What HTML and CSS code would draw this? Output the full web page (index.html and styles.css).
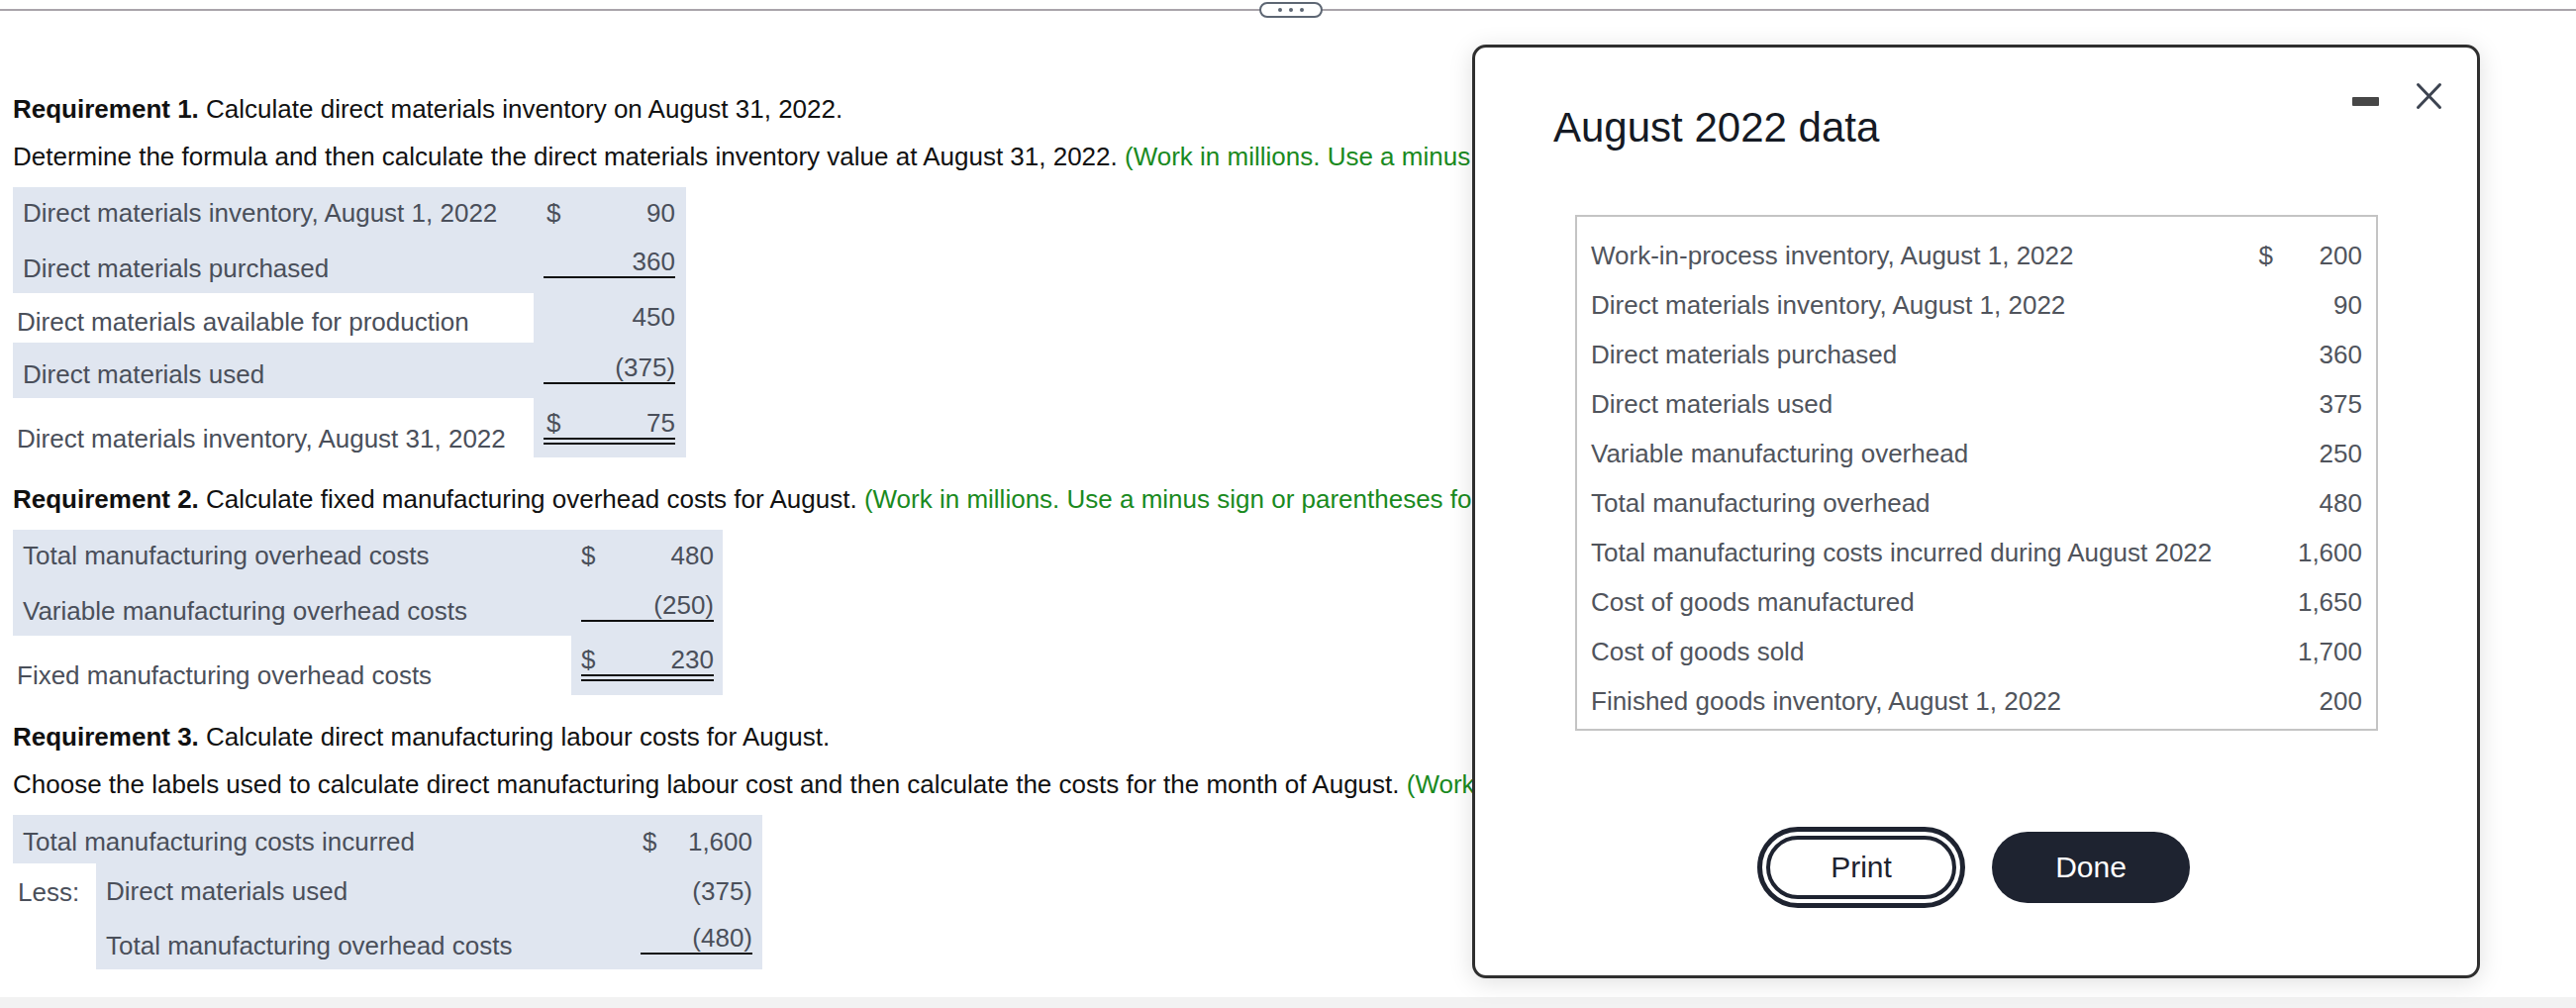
FILE: index.html
```html
<!DOCTYPE html>
<html lang="en">
<head>
<meta charset="utf-8">
<title>August 2022 data</title>
<link rel="stylesheet" href="styles.css">
</head>
<body>
<div class="topbar"><div class="grip"><span></span><span></span><span></span></div></div>
<main class="content">
  <p class="line req first"><b>Requirement 1.</b> Calculate direct materials inventory on August 31, 2022.</p>
  <p class="line instr">Determine the formula and then calculate the direct materials inventory value at August 31, 2022. <span class="hint">(Work in millions. Use a minus sign or parentheses for a number to be subtracted.)</span></p>
  <div class="sheet t1">
    <div class="row shade h53">
      <div class="lab pt11">Direct materials inventory, August 1, 2022</div>
      <div class="val pt11"><div class="amt"><span>$</span><span>90</span></div></div>
    </div>
    <div class="row shade h54">
      <div class="lab pt14">Direct materials purchased</div>
      <div class="val pt7"><div class="amt single"><span></span><span>360</span></div></div>
    </div>
    <div class="row h50">
      <div class="lab plain pt14">Direct materials available for production</div>
      <div class="val shade pt9"><div class="amt"><span></span><span>450</span></div></div>
    </div>
    <div class="row shade h56">
      <div class="lab pt17">Direct materials used</div>
      <div class="val pt10"><div class="amt single"><span></span><span>(375)</span></div></div>
    </div>
    <div class="row h60">
      <div class="lab plain pt26">Direct materials inventory, August 31, 2022</div>
      <div class="val shade pt10"><div class="amt double"><span>$</span><span>75</span></div></div>
    </div>
  </div>

  <p class="line req"><b>Requirement 2.</b> Calculate fixed manufacturing overhead costs for August. <span class="hint">(Work in millions. Use a minus sign or parentheses for a number to be subtracted.)</span></p>
  <div class="sheet t2">
    <div class="row shade h54">
      <div class="lab pt11">Total manufacturing overhead costs</div>
      <div class="val pt11"><div class="amt"><span>$</span><span>480</span></div></div>
    </div>
    <div class="row shade h53">
      <div class="lab pt13">Variable manufacturing overhead costs</div>
      <div class="val pt7"><div class="amt single"><span></span><span>(250)</span></div></div>
    </div>
    <div class="row h60">
      <div class="lab plain pt25">Fixed manufacturing overhead costs</div>
      <div class="val shade pt9"><div class="amt double"><span>$</span><span>230</span></div></div>
    </div>
  </div>

  <p class="line req"><b>Requirement 3.</b> Calculate direct manufacturing labour costs for August.</p>
  <p class="line instr">Choose the labels used to calculate direct manufacturing labour cost and then calculate the costs for the month of August. <span class="hint">(Work in millions. Use a minus sign or parentheses for a number to be subtracted.)</span></p>
  <div class="sheet t3">
    <div class="row shade h49">
      <div class="lab wide pt12">Total manufacturing costs incurred</div>
      <div class="val pt12"><div class="amt"><span>$</span><span>1,600</span></div></div>
    </div>
    <div class="split">
      <div class="less pt14">Less:</div>
      <div class="subblock shade">
        <div class="row h54">
          <div class="lab pt13">Direct materials used</div>
          <div class="val pt13"><div class="amt"><span></span><span>(375)</span></div></div>
        </div>
        <div class="row h53">
          <div class="lab pt14">Total manufacturing overhead costs</div>
          <div class="val pt6"><div class="amt single"><span></span><span>(480)</span></div></div>
        </div>
      </div>
    </div>
  </div>
</main>
<div class="band"></div>

<section class="modal">
  <header class="mhead">
    <h2 class="mtitle">August 2022 data</h2>
    <div class="mctrl">
      <span class="minbtn"></span>
      <svg class="xbtn" viewBox="0 0 27 28" aria-hidden="true"><path d="M2.5 2.5 L24.5 25.5 M24.5 2.5 L2.5 25.5" fill="none" stroke="#3d4451" stroke-width="3" stroke-linecap="round"/></svg>
    </div>
  </header>
  <div class="databox">
    <div class="drow"><span>Work-in-process inventory, August 1, 2022</span><span class="dc">$</span><span class="dv">200</span></div>
    <div class="drow"><span>Direct materials inventory, August 1, 2022</span><span class="dc"></span><span class="dv">90</span></div>
    <div class="drow"><span>Direct materials purchased</span><span class="dc"></span><span class="dv">360</span></div>
    <div class="drow"><span>Direct materials used</span><span class="dc"></span><span class="dv">375</span></div>
    <div class="drow"><span>Variable manufacturing overhead</span><span class="dc"></span><span class="dv">250</span></div>
    <div class="drow"><span>Total manufacturing overhead</span><span class="dc"></span><span class="dv">480</span></div>
    <div class="drow"><span>Total manufacturing costs incurred during August 2022</span><span class="dc"></span><span class="dv">1,600</span></div>
    <div class="drow"><span>Cost of goods manufactured</span><span class="dc"></span><span class="dv">1,650</span></div>
    <div class="drow"><span>Cost of goods sold</span><span class="dc"></span><span class="dv">1,700</span></div>
    <div class="drow"><span>Finished goods inventory, August 1, 2022</span><span class="dc"></span><span class="dv">200</span></div>
  </div>
  <div class="mbtns">
    <button class="btn print" type="button">Print</button>
    <button class="btn done" type="button">Done</button>
  </div>
</section>
</body>
</html>
```

FILE: styles.css
```css
* { box-sizing: border-box; }
html, body { margin: 0; padding: 0; }
body {
  width: 2602px;
  height: 1018px;
  overflow: hidden;
  position: relative;
  background: #fff;
  font-family: "Liberation Sans", Arial, sans-serif;
  font-size: 26px;
  color: #111;
}

/* top resize bar */
.topbar {
  height: 20px;
  display: flex;
  justify-content: center;
  align-items: center;
  background: linear-gradient(#a9a4aa, #a9a4aa) center / 100% 2px no-repeat;
}
.grip {
  width: 64px;
  height: 16px;
  margin-left: 6px;
  border: 2px solid #5d6673;
  border-radius: 9px;
  background: #fff;
  display: flex;
  justify-content: center;
  align-items: center;
  gap: 7px;
}
.grip span {
  width: 4px;
  height: 4px;
  border-radius: 50%;
  background: #5d6673;
}

/* main question content (clipped by the floating window edge) */
.content {
  width: 1487px;
  overflow: hidden;
  padding: 72px 0 0 13px;
}
.line {
  margin: 0;
  line-height: 36px;
  white-space: nowrap;
}
.req { margin-top: 24px; }
.req.first { margin-top: 0; }
.instr { margin-top: 12px; }
.hint { color: #1a8a1e; }

.sheet {
  margin-top: 13px;
  color: #4a4f5a;
}
.shade { background: #e0e6f0; }
.row { display: flex; }
.lab {
  padding-left: 10px;
  line-height: 30px;
  white-space: nowrap;
}
.lab.plain { padding-left: 4px; background: #fff; }
.val { line-height: 30px; }
.amt {
  display: flex;
  justify-content: space-between;
  line-height: 30px;
}
.amt.single { border-bottom: 2px solid #111; }
.amt.double { border-bottom: 7px double #111; }

.h49 { height: 49px; }
.h50 { height: 50px; }
.h53 { height: 53px; }
.h54 { height: 54px; }
.h56 { height: 56px; }
.h60 { height: 60px; }
.pt6 { padding-top: 6px; }
.pt7 { padding-top: 7px; }
.pt9 { padding-top: 9px; }
.pt10 { padding-top: 10px; }
.pt11 { padding-top: 11px; }
.pt12 { padding-top: 12px; }
.pt13 { padding-top: 13px; }
.pt14 { padding-top: 14px; }
.pt17 { padding-top: 17px; }
.pt25 { padding-top: 25px; }
.pt26 { padding-top: 26px; }

.t1 { width: 680px; }
.t1 .lab { width: 526px; }
.t1 .val { width: 154px; padding-left: 10px; padding-right: 11px; }
.t1 .amt { padding-left: 3px; }

.t2 { width: 717px; }
.t2 .lab { width: 564px; }
.t2 .val { width: 153px; padding-left: 10px; padding-right: 9px; }

.t3 { width: 757px; }
.t3 .lab { width: 540px; }
.t3 .lab.wide { width: 624px; }
.t3 .val { width: 133px; padding-left: 10px; padding-right: 10px; }
.t3 .amt { padding-left: 2px; }
.split { display: flex; }
.less {
  width: 84px;
  padding-left: 5px;
  line-height: 30px;
}
.subblock { width: 673px; }

.band {
  margin-top: 28px;
  height: 40px;
  background: #f2f2f2;
}

/* floating data window */
.modal {
  position: absolute;
  left: 1487px;
  top: 45px;
  width: 1018px;
  height: 943px;
  border: 3px solid #2f2f2f;
  border-radius: 14px;
  background: #fff;
  box-shadow: 0 4px 24px rgba(0, 0, 0, 0.13);
}
.mhead {
  display: flex;
  justify-content: space-between;
  align-items: flex-start;
  padding: 35px 35px 0 79px;
}
.mtitle {
  margin: 22px 0 0;
  font-size: 42px;
  font-weight: normal;
  line-height: 48px;
  color: #151a24;
}
.mctrl {
  display: flex;
  align-items: flex-start;
  gap: 37px;
}
.minbtn {
  display: block;
  width: 27px;
  height: 9px;
  margin-top: 15px;
  border-radius: 1px;
  background: #474747;
}
.xbtn {
  display: block;
  width: 27px;
  height: 28px;
}
.databox {
  margin: 64px 0 0 101px;
  width: 811px;
  border: 2px solid #c4c4c4;
  padding: 14px 14px 3px;
  color: #50545c;
}
.drow {
  display: grid;
  grid-template-columns: 1fr 30px 90px;
  height: 50px;
  line-height: 50px;
  white-space: nowrap;
}
.dc, .dv { text-align: right; }

.mbtns {
  display: flex;
  justify-content: center;
  align-items: center;
  gap: 36px;
  margin-top: 102px;
  padding-left: 4px;
}
.btn {
  font-family: "Liberation Sans", Arial, sans-serif;
  font-size: 30px;
  border-radius: 40px;
  padding: 0;
}
.print {
  width: 192px;
  height: 64px;
  background: #fff;
  color: #1e2330;
  border: 4px solid #1e2330;
  outline: 5px solid #1e2330;
  outline-offset: 4px;
}
.done {
  width: 200px;
  height: 72px;
  background: #1e2330;
  color: #fff;
  border: none;
}
```
